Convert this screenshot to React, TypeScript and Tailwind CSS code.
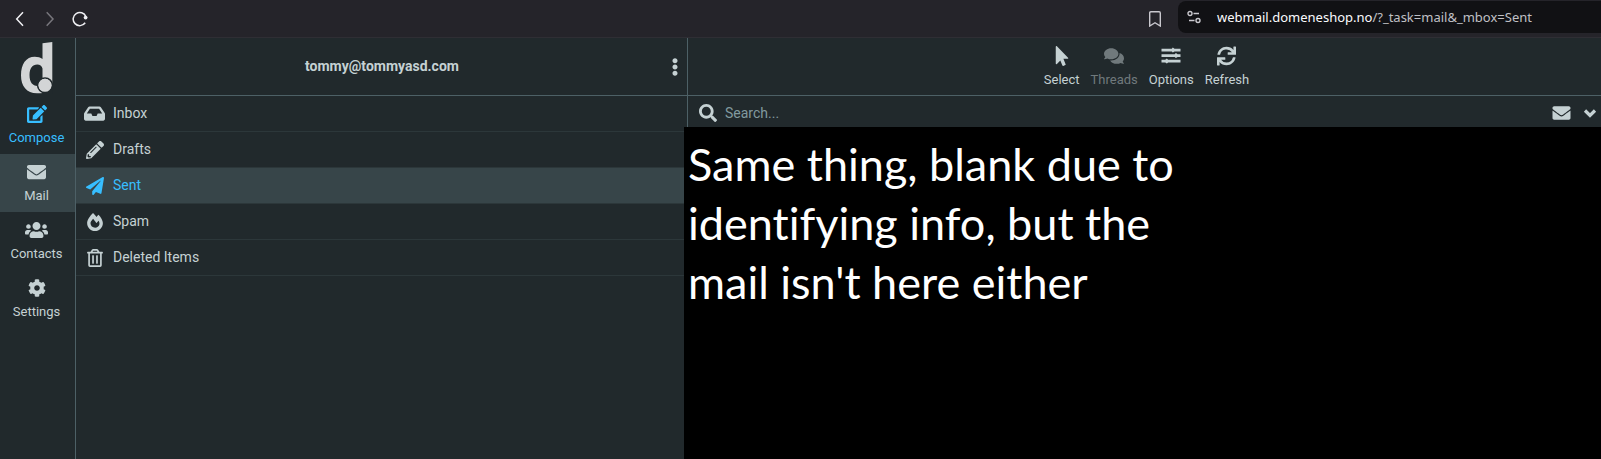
import type { ReactNode } from "react";
import {
  FaCog,
  FaComments,
  FaEdit,
  FaEllipsisV,
  FaEnvelope,
  FaFireAlt,
  FaInbox,
  FaMousePointer,
  FaPaperPlane,
  FaPencilAlt,
  FaRegTrashAlt,
  FaSearch,
  FaSync,
  FaUsers,
} from "react-icons/fa";

type Item = { label: string; icon: ReactNode; active?: boolean };

const folders: Item[] = [
  { label: "Inbox", icon: <FaInbox className="h-[19px] w-[21px]" preserveAspectRatio="none" /> },
  { label: "Drafts", icon: <FaPencilAlt className="size-[18px]" /> },
  { label: "Sent", icon: <FaPaperPlane className="size-[18px]" />, active: true },
  { label: "Spam", icon: <FaFireAlt className="size-[18px]" /> },
  { label: "Deleted Items", icon: <FaRegTrashAlt className="size-[18px]" /> },
];

function SlidersIcon() {
  return (
    <svg viewBox="0 0 20 20" className="size-5" fill="currentColor" aria-hidden="true">
      <path d="M.5 2.700h10.300l1-1.200 1.700 1.200h6v2.700h-6l-1.700 1.200-1-1.200H.5zM.5 8.200h13.200l1.200-1.200 1.700 1.200h2.900v2.700h-2.900l-1.700 1.200-1.200-1.200H.5zM.5 13.700h3.700l1.700-1.200 1.200 1.200h12.400v2.700H7.100l-1.200 1.200-1.700-1.200H.5z" />
    </svg>
  );
}

function Logo() {
  return (
    <svg viewBox="0 0 32 52" className="h-[52px] w-8" aria-label="Domeneshop" role="img">
      <path
        fill="#d3d5d6"
        fillRule="evenodd"
        d="M21.500 1.300 31.300 0v43.500L22 51c-2 .2-4 .3-6 .3C5.500 51.300 0 44 0 33.200 0 22 5 14.700 13.800 14.700c3 0 5.700.8 7.700 2.300zM21.500 26.500c-.8-2.600-2.500-4-5.300-4-4.700 0-7.700 4-7.700 10.500 0 7 3 11 8 11l5-2z"
      />
      <circle cx="24" cy="43.300" r="7.300" fill="#d3d5d6" stroke="#21292c" strokeWidth="1.700" />
      <path fill="#21292c" d="M20.500 49.800 31.500 46v6H22z" />
      <circle cx="24" cy="43.300" r="6.500" fill="#d3d5d6" />
    </svg>
  );
}

function BrowserBar() {
  return (
    <header className="flex h-[38px] items-stretch border-b border-[#2f2e34] bg-[#25242a] text-[#f0f0f4]">
      <nav className="flex items-center gap-[14px] pl-3" aria-label="Browser">
        <button type="button" aria-label="Back" className="flex size-4 items-center justify-center">
          <svg viewBox="0 0 16 16" className="size-4" fill="none" stroke="currentColor" strokeWidth="1.5">
            <path d="M11 1.300 4.700 8 11 14.700" />
          </svg>
        </button>
        <button type="button" aria-label="Forward" disabled className="flex size-4 items-center justify-center text-[#77767c]">
          <svg viewBox="0 0 16 16" className="size-4" fill="none" stroke="currentColor" strokeWidth="1.500">
            <path d="M4.700 1.300 11 8l-6.300 6.700" />
          </svg>
        </button>
        <button type="button" aria-label="Reload" className="flex size-4 items-center justify-center">
          <svg viewBox="0 0 16 16" className="size-4" fill="none" stroke="currentColor" strokeWidth="1.500">
            <path d="M13.200 11.800a6.600 6.600 0 1 1 .7-6.200" />
            <circle cx="13.600" cy="6.600" r="1.900" fill="currentColor" stroke="none" />
          </svg>
        </button>
      </nav>
      <div className="ml-auto flex w-[453px] items-center">
        <button type="button" aria-label="Bookmark" className="flex w-[30px] items-center">
          <svg viewBox="0 0 14 16" className="h-4 w-[14px]" fill="none" stroke="#c9c8ce" strokeWidth="1.400">
            <path d="M1.700 15V2q0-1.200 1.200-1.200h8.200q1.200 0 1.200 1.200v13L7 11.700z" />
          </svg>
        </button>
        <div className="mb-1 mt-px flex h-8 flex-1 items-center gap-4 self-start rounded-l-lg bg-[#111114] pl-[9px]">
          <svg viewBox="0 0 14 14" className="size-[14px]" fill="none" stroke="#c9c8ce" strokeWidth="1.400" aria-hidden="true">
            <circle cx="3" cy="3.500" r="2" />
            <circle cx="11" cy="10.500" r="2" />
            <path d="M6.500 3.500H12M2 10.500h5.500" />
          </svg>
          <p className="font-['Noto_Sans',sans-serif] text-[13px] leading-5 text-[#fbfbfe]">
            webmail.domeneshop.no<span className="text-[#c0c0c5]">/?_task=mail&amp;_mbox=Sent</span>
          </p>
        </div>
      </div>
    </header>
  );
}

function SideLink({ icon, label, tone }: { icon: ReactNode; label: string; tone?: "accent" | "active" }) {
  const look = tone === "accent" ? "text-[#37beff]" : tone === "active" ? "bg-[#374549]" : "";
  return (
    <a href="#" className={`flex h-[58px] flex-col items-center gap-1 pr-0.5 pt-2 text-[13px] leading-5 ${look}`}>
      {icon}
      <span>{label}</span>
    </a>
  );
}

function Tool({ icon, label, disabled }: { icon: ReactNode; label: string; disabled?: boolean }) {
  return (
    <button
      type="button"
      disabled={disabled}
      className="flex flex-col items-center gap-1 text-[13px] leading-5 disabled:text-[#70797c]"
    >
      {icon}
      <span>{label}</span>
    </button>
  );
}

export default function App() {
  return (
    <div className="flex min-h-screen flex-col bg-[#21292c] font-[Roboto,sans-serif] text-[14px] text-[#c5d1d3]">
      <BrowserBar />
      <div className="flex flex-1 items-stretch">
        <nav className="w-[76px] shrink-0 border-r border-[#4d6066]" aria-label="Tasks">
          <div className="flex h-[58px] justify-center pr-0.5 pt-1">
            <Logo />
          </div>
          <SideLink icon={<FaEdit className="size-5" />} label="Compose" tone="accent" />
          <SideLink icon={<FaEnvelope className="h-5 w-[19px]" />} label="Mail" tone="active" />
          <SideLink icon={<FaUsers className="h-5 w-[23px]" />} label="Contacts" />
          <SideLink icon={<FaCog className="h-5 w-[18px]" />} label="Settings" />
        </nav>

        <section className="flex w-[612px] shrink-0 flex-col border-r border-[#4d6066]">
          <div className="flex h-[58px] items-center border-b border-[#4d6066]">
            <h1 className="flex-1 pl-[1px] text-center font-bold">tommy@tommyasd.com</h1>
            <button type="button" aria-label="Folder actions" className="-ml-6 flex w-6 justify-center">
              <FaEllipsisV className="h-[18px] w-5" />
            </button>
          </div>
          <ul>
            {folders.map((f) => (
              <li key={f.label} className="border-b border-[#2c373a]">
                <a
                  href="#"
                  className={`flex h-[35px] items-center gap-2 pl-2 ${f.active ? "bg-[#374549] text-[#37beff]" : ""}`}
                >
                  <span className="flex w-[21px] justify-center">{f.icon}</span>
                  {f.label}
                </a>
              </li>
            ))}
          </ul>
        </section>

        <main className="flex min-w-0 flex-1 flex-col">
          <div className="flex h-[58px] justify-center gap-[11px] border-b border-[#4d6066] pl-1 pt-2">
            <Tool icon={<FaMousePointer className="size-5" />} label="Select" />
            <Tool icon={<FaComments className="size-5" />} label="Threads" disabled />
            <Tool icon={<SlidersIcon />} label="Options" />
            <Tool icon={<FaSync className="h-5 w-[19px]" />} label="Refresh" />
          </div>
          <form className="flex h-[31px] items-center pl-[11px] pr-1 pt-[3px]" role="search">
            <label htmlFor="search" aria-label="Search mail">
              <FaSearch className="size-[18px]" />
            </label>
            <input
              id="search"
              type="text"
              placeholder="Search..."
              className="ml-2 min-w-0 flex-1 bg-transparent outline-none placeholder:text-[#819a9f]"
            />
            <button type="button" aria-label="Unread only">
              <FaEnvelope className="h-[18px] w-[19px]" />
            </button>
            <button type="button" aria-label="Search options" className="ml-3">
              <svg viewBox="0 0 14 12" className="h-3 w-[14px]" fill="none" stroke="currentColor" strokeWidth="3.200">
                <path d="M2 3.500 7 8.500l5-5" />
              </svg>
            </button>
          </form>
          <div className="relative -ml-1 flex-1 bg-black pl-1 pt-2 font-[Lato,sans-serif] text-[45px] leading-[59px] text-white [font-variant-ligatures:none]">
            <p>
              Same thing, blank due to
              <br />
              identifying info, but the
              <br />
              mail isn't here either
            </p>
          </div>
        </main>
      </div>
    </div>
  );
}
